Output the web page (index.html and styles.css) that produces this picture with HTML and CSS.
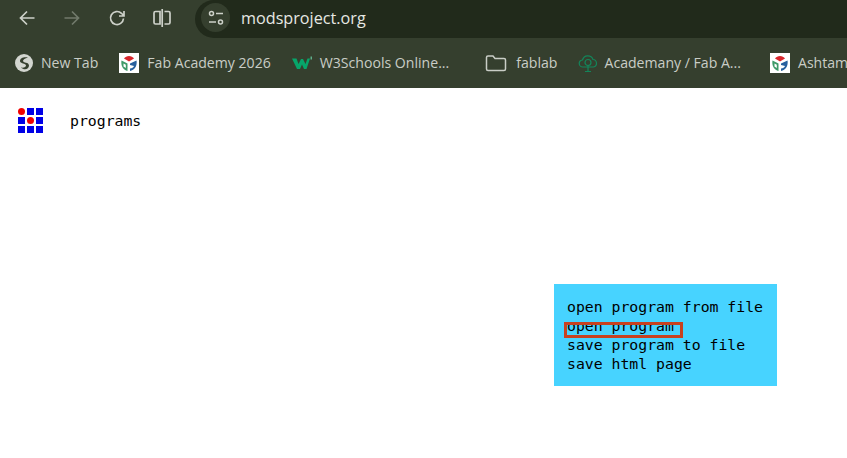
FILE: index.html

```html
<!DOCTYPE html>
<html lang="en">
<head>
    <meta charset="UTF-8">
    <meta name="viewport" content="width=device-width, initial-scale=1.0">
    <title>mods project</title>
    <link rel="stylesheet" href="styles.css">
</head>
<body>
    <svg class="defs" width="0" height="0">
        <symbol id="fab" viewBox="0 0 20 20">
            <rect width="20" height="20" fill="#fff"/>
            <path d="M5 5.500C7 2 13 2 15 5.500L10 8.500Z" fill="#d8262c"/>
            <path d="M2.500 7.500L8.500 10.500V18C4.500 17.500 1.500 12.500 2.500 7.500Z" fill="#3f9a68"/>
            <path d="M4.500 10.500L6.800 11.800V15L4.500 13.500Z" fill="#fff"/>
            <path d="M17.500 7.500C18.500 12.500 15.500 17.500 11 18V15.500C13 15.500 14.500 14.500 15 13L11 12V10.500Z" fill="#27609e"/>
        </symbol>
    </svg>

    <header class="chrome">
        <div class="toolbar">
            <div class="nav-btns">
                <svg class="nav-icon" width="18" height="18" viewBox="0 0 18 18"><path d="M16.500 9H2.500M9 2.500L2.500 9 9 15.500"/></svg>
                <svg class="nav-icon dim" width="18" height="18" viewBox="0 0 18 18"><path d="M1.500 9h14M9 2.500L15.500 9 9 15.500"/></svg>
                <svg class="nav-icon" width="18" height="18" viewBox="0 0 18 18"><path d="M15.500 9.500A6.500 6.500 0 1 1 13.500 4.300L15.500 6.500M16 2v5h-5"/></svg>
                <svg class="nav-icon split" width="20" height="20" viewBox="0 0 20 20"><path d="M8 3.500H3.500a1.500 1.500 0 0 0-1.500 1.500v9.500a1.500 1.500 0 0 0 1.500 1.500H8zM10.200 1v18M12.500 3.500H16.500a1.500 1.500 0 0 1 1.500 1.500v9.500a1.500 1.500 0 0 1-1.500 1.500H12.500"/></svg>
            </div>
            <div class="address">
                <span class="site-btn">
                    <svg class="nav-icon thin" width="18" height="18" viewBox="0 0 18 18"><circle cx="4.500" cy="4.500" r="2"/><path d="M9 4.500h7M2 13h7"/><circle cx="13.500" cy="13" r="2"/></svg>
                </span>
                <span class="url">modsproject.org</span>
            </div>
        </div>
        <div class="bookmarks">
            <span class="bookmark">
                <svg width="18" height="18" viewBox="0 0 18 18"><circle cx="9" cy="9" r="9" fill="#d3d6d0"/><path d="M13 3.500C9 2.500 5 4 5 7c0 3 6 2 6 4.500 0 1.500-2 2.500-5 2 3 3 8 2 8-2 0-3.500-6-2.500-6-4.500 0-1.500 2-2.500 5-3.500z" fill="#353f2e"/></svg>
                New Tab
            </span>
            <span class="bookmark">
                <svg width="20" height="20"><use href="#fab"/></svg>
                Fab Academy 2026
            </span>
            <span class="bookmark">
                <svg width="20" height="14" viewBox="0 0 20 14"><path d="M0 2.500h4.500l2 5.500L9 3h2l2.500 5 2-5.500h2.500L14.500 13h-2.500L10 8.500 8 13H5z" fill="#07a56a"/><path d="M18.500 0.500h1.500v3h-1.500z" fill="#5fae8a"/></svg>
                W3Schools Online...
            </span>
            <span class="bookmark folder">
                <svg width="22" height="18" viewBox="0 0 22 18"><path d="M1.500 3.500A1.500 1.500 0 0 1 3 2h5l2 2.500h9A1.500 1.500 0 0 1 20.500 6v9A1.500 1.500 0 0 1 19 16.500H3A1.500 1.500 0 0 1 1.500 15z" fill="none" stroke="#c9cdc6" stroke-width="1.500"/></svg>
                fablab
            </span>
            <span class="bookmark academany">
                <svg width="20" height="20" viewBox="0 0 20 20" fill="none" stroke="#13855a" stroke-width="1.200"><path d="M5 14a3.500 3.500 0 0 1-.5-7A5.500 5.500 0 0 1 15 6.500 3.800 3.800 0 0 1 15.500 14z"/><circle cx="10" cy="9.500" r="3"/><path d="M10 12v6M7 18.500h6"/></svg>
                Academany / Fab A...
            </span>
            <span class="bookmark ashtam">
                <svg width="20" height="20"><use href="#fab"/></svg>
                Ashtam
            </span>
        </div>
    </header>

    <main class="page">
        <div class="page-head">
            <svg class="logo" width="25" height="25" viewBox="0 0 25 25">
                <circle cx="3.500" cy="3.500" r="3.500" fill="#f00000"/>
                <rect x="9" width="7" height="7" fill="#0000e6"/>
                <rect x="18" width="7" height="7" fill="#0000e6"/>
                <rect y="9" width="7" height="7" fill="#0000e6"/>
                <circle cx="12.500" cy="12.500" r="3.500" fill="#f00000"/>
                <rect x="18" y="9" width="7" height="7" fill="#0000e6"/>
                <rect y="18" width="7" height="7" fill="#0000e6"/>
                <rect x="9" y="18" width="7" height="7" fill="#0000e6"/>
                <rect x="18" y="18" width="7" height="7" fill="#0000e6"/>
            </svg>
            <span class="mono">programs</span>
        </div>

        <div class="menu mono">
            <div>open program from file</div>
            <div>open program</div>
            <div>save program to file</div>
            <div>save html page</div>
            <span class="highlight"></span>
        </div>
    </main>
</body>
</html>
```

FILE: styles.css

```css
* {
    margin: 0;
    padding: 0;
    box-sizing: border-box;
}

body {
    width: 847px;
    height: 458px;
    overflow: hidden;
    background: #ffffff;
    font-family: 'Open Sans', 'Noto Sans', sans-serif;
}

.defs {
    position: absolute;
}

.chrome {
    background: #353f2e;
}

.toolbar {
    display: flex;
    height: 38px;
}

.nav-btns {
    display: flex;
    align-items: center;
    gap: 27px;
    width: 195px;
    padding: 0 0 3px 18px;
}

.nav-icon {
    fill: none;
    stroke: #cdd1c9;
    stroke-width: 1.7;
}

.nav-icon.dim {
    stroke: #717a6b;
}

.nav-icon.thin {
    stroke-width: 1.5;
}

.nav-icon.split {
    margin-left: -1px;
}

.address {
    flex: 1;
    display: flex;
    align-items: center;
    gap: 11px;
    padding: 0 0 3px 6px;
    background: #212a1b;
    border-radius: 19px 0 0 19px;
}

.site-btn {
    display: flex;
    align-items: center;
    justify-content: center;
    width: 29px;
    height: 29px;
    border-radius: 50%;
    background: #353f2e;
}

.url {
    color: #e6e8e3;
    font-size: 16.2px;
}

.bookmarks {
    display: flex;
    align-items: center;
    gap: 21px;
    height: 50px;
    padding: 0 0 2px 15px;
    white-space: nowrap;
    overflow: hidden;
}

.bookmark {
    display: flex;
    align-items: center;
    gap: 8px;
    flex-shrink: 0;
    color: #c9cdc6;
    font-size: 14.1px;
}

.bookmark svg {
    margin-bottom: -2px;
}

.folder {
    margin-left: 15px;
    gap: 9px;
}

.academany {
    gap: 6px;
}

.ashtam {
    margin-left: 8px;
}

.page {
    position: relative;
    height: 370px;
}

.page-head {
    display: flex;
    align-items: center;
    gap: 27px;
    padding: 20px 0 0 18px;
}

.mono {
    font-family: 'DejaVu Sans Mono', monospace;
    font-size: 14.8px;
    color: #000000;
}

.menu {
    position: absolute;
    left: 554px;
    top: 196px;
    width: 223px;
    height: 102px;
    padding: 13px 13px;
    background: #47d3ff;
    line-height: 19px;
}

.highlight {
    position: absolute;
    left: 10px;
    top: 38px;
    width: 119px;
    height: 16px;
    border: 3px solid #c8411f;
}
```
